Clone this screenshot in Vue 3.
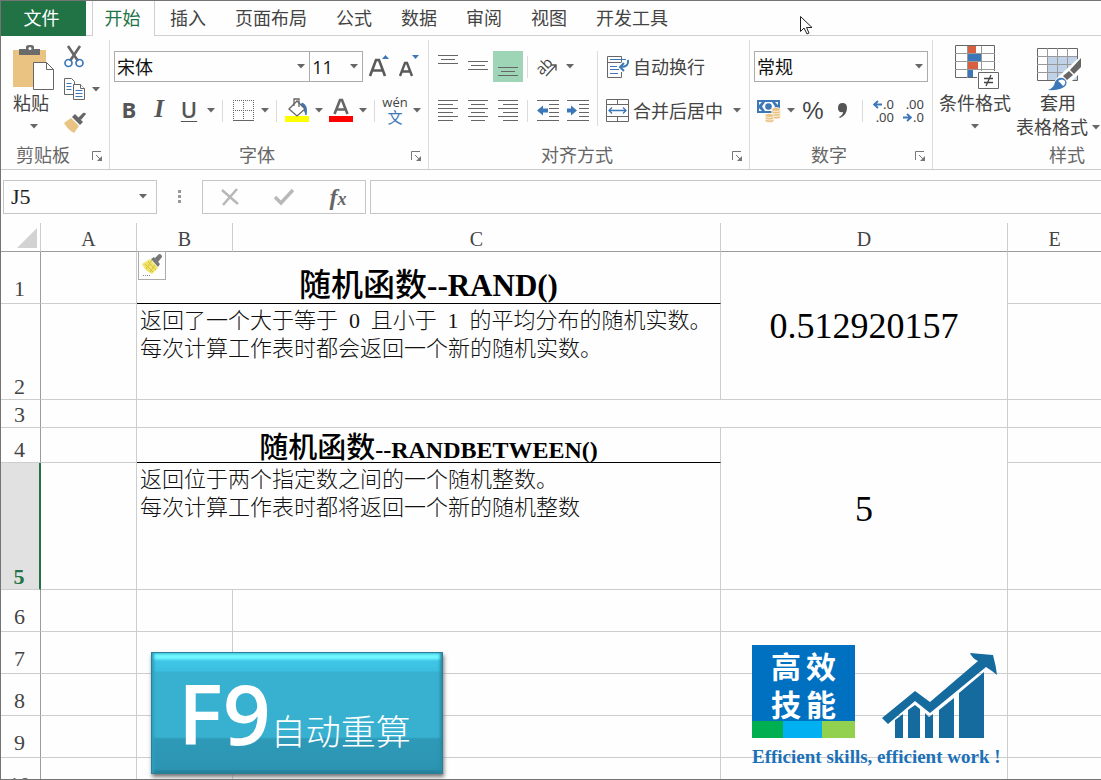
<script setup>
import { h, ref } from 'vue'

const Caret = () =>
  h('svg', { width: 8, height: 5, viewBox: '0 0 8 5', 'aria-hidden': 'true' }, [
    h('path', { d: 'M0 0h8L4 4.5z', fill: '#666' })
  ])

const Launcher = () =>
  h('svg', { width: 11, height: 11, viewBox: '0 0 11 11', fill: 'none', stroke: '#777', 'aria-hidden': 'true' }, [
    h('path', { d: 'M.5 9V.5H9M4 4l4 4' }),
    h('path', { d: 'M10 5v5H5z', fill: '#777', stroke: 'none' })
  ])

const tabs = ['插入', '页面布局', '公式', '数据', '审阅', '视图', '开发工具']
const alignRows = [
  { label: '顶端对齐', d: 'M0 4.5h20M3 8.5h14M0 12.5h20' },
  { label: '垂直居中', d: 'M0 10.5h20M3 14.5h14M0 18.5h20' },
  { label: '底端对齐', d: 'M0 16.5h20M3 20.5h14M0 24.5h20', on: true }
]
const alignCols = [
  { label: '左对齐', d: 'M0 5.5h20M0 9.5h15M0 13.5h20M0 17.5h15M0 21.5h20M0 25.5h15' },
  { label: '居中', d: 'M0 5.5h20M3 9.5h14M0 13.5h20M3 17.5h14M0 21.5h20M3 25.5h14' },
  { label: '右对齐', d: 'M0 5.5h20M5 9.5h15M0 13.5h20M5 17.5h15M0 21.5h20M5 25.5h15' }
]
const cellName = ref('J5')
const formula = ref('')
</script>

<template>
  <div class="window">
    <nav class="tabs" aria-label="功能区">
      <button class="tab file">文件</button>
      <button class="tab active">开始</button>
      <button v-for="t in tabs" :key="t" class="tab">{{ t }}</button>
    </nav>

    <div class="ribbon">
      <section class="group clipboard">
        <div class="body">
          <button class="big paste">
            <svg width="42" height="46" viewBox="0 0 42 46">
              <path d="M0 5h33v37H0z" fill="#eac282" />
              <path d="M6 4h7V2q0-2 3-2h2q3 0 3 2v2h6v6H6z" fill="#6b6b6b" />
              <circle cx="17" cy="3.500" r="1.500" fill="#fff" />
              <path d="M20.500 17.500h13l7 7v20h-20z" fill="#fff" stroke="#666" />
              <path d="M33.500 17.500v7h7" fill="none" stroke="#666" />
            </svg>
            <span>粘贴</span>
            <Caret />
          </button>
          <div class="stack">
            <button class="tool" aria-label="剪切">
              <svg width="20" height="23" viewBox="0 0 20 23" fill="none">
                <path d="M4 1l10 15M16 1L6 16" stroke="#666" stroke-width="2.600" />
                <circle cx="4.500" cy="18" r="3.500" stroke="#3c77b8" stroke-width="1.700" />
                <circle cx="15.500" cy="18" r="3.500" stroke="#3c77b8" stroke-width="1.700" />
              </svg>
            </button>
            <button class="tool copy" aria-label="复制">
              <svg width="21" height="22" viewBox="0 0 21 22" fill="#fff" stroke="#666">
                <path d="M.5.500h7l3 3v13h-10z" />
                <path d="M2.500 5.500h5M2.500 8.500h5M2.500 11.500h5" stroke="#3c77b8" />
                <path d="M9.500 6.500h7l4 4v11h-11z" />
                <path d="M16.500 6.500v4h4" />
                <path d="M11.500 12.500h7M11.500 15.500h7M11.500 18.500h7" stroke="#3c77b8" />
              </svg>
              <Caret />
            </button>
            <button class="tool" aria-label="格式刷">
              <svg width="22" height="21" viewBox="0 0 22 21">
                <path d="M0 11l7-5 8 8-5 7q-6-3-10-10z" fill="#eac282" />
                <path d="M8 5l3-3 8 8-3 3z" fill="#666" />
                <path d="M14 6l5-5q2-1 3 1l-5 6z" fill="#666" />
              </svg>
            </button>
          </div>
        </div>
        <footer><span>剪贴板</span><button class="launch" aria-label="剪贴板选项"><Launcher /></button></footer>
      </section>

      <section class="group font">
        <div class="body column">
          <div class="line">
            <label class="combo family">
              <select aria-label="字体"><option>宋体</option></select><Caret />
            </label>
            <label class="combo size">
              <select aria-label="字号"><option>11</option></select><Caret />
            </label>
            <button class="cell" aria-label="增大字号">
              <svg width="22" height="26" viewBox="0 0 22 26">
                <path d="M2 22L8 6h3l6 16M4.500 16.500h10" fill="none" stroke="#5a5a5a" stroke-width="2.600" />
                <path d="M14 5l3.500-4L21 5z" fill="#3c77b8" />
              </svg>
            </button>
            <button class="cell" aria-label="减小字号">
              <svg width="22" height="26" viewBox="0 0 22 26">
                <path d="M2 22L7 9h2l5 13M4 17.500h8" fill="none" stroke="#5a5a5a" stroke-width="2.400" />
                <path d="M14 1h7l-3.500 4z" fill="#3c77b8" />
              </svg>
            </button>
          </div>
          <div class="line">
            <button class="cell glyph bold">B</button>
            <button class="cell glyph italic">I</button>
            <button class="cell glyph under">U</button>
            <button class="drop" aria-label="下划线类型"><Caret /></button>
            <i class="rule"></i>
            <button class="cell" aria-label="边框">
              <svg width="21" height="22" viewBox="0 0 21 22" fill="none" stroke="#666">
                <path d="M0 .5h21M.5 0v21M20.500 0v21M0 10.500h21M10.500 0v21" stroke-dasharray="1 1" />
                <path d="M0 20.500h21" />
              </svg>
            </button>
            <button class="drop" aria-label="边框类型"><Caret /></button>
            <i class="rule"></i>
            <button class="cell" aria-label="填充颜色">
              <svg width="24" height="25" viewBox="0 0 24 25">
                <path d="M0 18h24v6H0z" fill="#ff0" />
                <path d="M17 5q6 2 4 12-1-6-5-8z" fill="#3c77b8" stroke="#3c77b8" />
                <path d="M4 11l8-8 8 8-8 7z" fill="#fff" stroke="#666" stroke-width="1.300" />
                <path d="M9 8V1h5v8" fill="none" stroke="#666" stroke-width="1.300" />
              </svg>
            </button>
            <button class="drop" aria-label="更多填充颜色"><Caret /></button>
            <button class="cell" aria-label="字体颜色">
              <svg width="24" height="25" viewBox="0 0 24 25">
                <path d="M0 18h24v6H0z" fill="#f00" />
                <path d="M5.500 16l5.500-14h2l5.500 14M8 11.500h8" fill="none" stroke="#666" stroke-width="2.600" />
              </svg>
            </button>
            <button class="drop" aria-label="更多字体颜色"><Caret /></button>
            <i class="rule"></i>
            <button class="cell pinyin"><span>wén</span><b>文</b></button>
            <button class="drop" aria-label="拼音选项"><Caret /></button>
          </div>
        </div>
        <footer><span>字体</span><button class="launch" aria-label="字体选项"><Launcher /></button></footer>
      </section>

      <section class="group align">
        <div class="body">
          <div class="column">
            <div class="line">
              <button v-for="a in alignRows" :key="a.label" class="cell" :class="{ on: a.on }" :aria-label="a.label">
                <svg width="20" height="31" viewBox="0 0 20 31" stroke="#666"><path :d="a.d" /></svg>
              </button>
              <i class="rule"></i>
              <button class="cell" aria-label="方向">
                <svg class="turn" width="22" height="22" viewBox="0 0 22 22">
                  <text x="0" y="15" transform="rotate(-45 8 12)" font-size="15" fill="#444">ab</text>
                  <path d="M9 20L19 9M13.500 9H19v5.500" fill="none" stroke="#555" stroke-width="1.400" />
                </svg>
              </button>
              <button class="drop" aria-label="方向选项"><Caret /></button>
            </div>
            <div class="line">
              <button v-for="a in alignCols" :key="a.label" class="cell" :aria-label="a.label">
                <svg width="20" height="31" viewBox="0 0 20 31" stroke="#666"><path :d="a.d" /></svg>
              </button>
              <i class="rule"></i>
              <button class="cell" aria-label="减少缩进量">
                <svg width="22" height="31" viewBox="0 0 22 31">
                  <path d="M0 5.500h22M12 9.500h10M12 13.500h10M12 17.500h10M12 21.500h10M0 25.500h22" stroke="#666" />
                  <path d="M0 15.500l6-5v3h5v4H6v3z" fill="#3c77b8" />
                </svg>
              </button>
              <button class="cell" aria-label="增加缩进量">
                <svg width="22" height="31" viewBox="0 0 22 31">
                  <path d="M0 5.500h22M12 9.500h10M12 13.500h10M12 17.500h10M12 21.500h10M0 25.500h22" stroke="#666" />
                  <path d="M10 15.500l-6-5v3H0v4h4v3z" fill="#3c77b8" />
                </svg>
              </button>
            </div>
          </div>
          <div class="column wraps">
            <button class="wide">
              <svg width="24" height="24" viewBox="0 0 24 24" fill="none" stroke="#666">
                <path d="M15.500 7V1.500H1.500v21h14V17M1.500 7.500h14" />
                <path d="M4 4.500h16M4 11.500h7M4 14.500h9M4 18.500h8" stroke="#3c77b8" />
                <path d="M22 5q1 7-7 7M18 8l-4 4 4 4" stroke="#3c77b8" stroke-width="2" />
              </svg>
              <span>自动换行</span>
            </button>
            <button class="wide">
              <svg width="24" height="24" viewBox="0 0 24 24" fill="none" stroke="#666">
                <path d="M.5.500h22v22H.5zM.5 5.500h22M.5 17.500h22M11.500.500v5M11.500 17.500v5" />
                <path d="M3 11.500h17M6 8.500l-3 3 3 3M17 8.500l3 3-3 3" stroke="#3c77b8" stroke-width="1.300" />
              </svg>
              <span>合并后居中</span>
              <Caret />
            </button>
          </div>
        </div>
        <footer><span>对齐方式</span><button class="launch" aria-label="对齐选项"><Launcher /></button></footer>
      </section>

      <section class="group number">
        <div class="body column">
          <label class="combo format">
            <select aria-label="数字格式"><option>常规</option></select><Caret />
          </label>
          <div class="line">
            <button class="cell" aria-label="会计数字格式">
              <svg width="24" height="24" viewBox="0 0 24 24">
                <path d="M0 1h23v13H0z" fill="#3c77b8" />
                <path d="M2 3h3L2 6zM21 3h-3l3 3zM2 12h3L2 9z" fill="#fff" />
                <path d="M5 7.500L8 3h7l3 4.500-3 4.500H8z" fill="#fff" />
                <circle cx="11.500" cy="7.500" r="3.300" fill="#3c77b8" />
                <g fill="#eac282" stroke="#fff" stroke-width=".700">
                  <ellipse cx="19" cy="18" rx="4.500" ry="2" /><ellipse cx="19" cy="15.500" rx="4.500" ry="2" />
                  <ellipse cx="19" cy="13" rx="4.500" ry="2" /><ellipse cx="19" cy="10.500" rx="4.500" ry="2" />
                  <ellipse cx="12.500" cy="21.500" rx="4.500" ry="2" /><ellipse cx="12.500" cy="19" rx="4.500" ry="2" />
                  <ellipse cx="12.500" cy="16.500" rx="4.500" ry="2" />
                </g>
              </svg>
            </button>
            <button class="drop" aria-label="货币"><Caret /></button>
            <button class="cell percent">%</button>
            <button class="cell" aria-label="千位分隔样式">
              <svg width="10" height="16" viewBox="0 0 10 16"><path d="M4.500 0Q9 0 9 5q0 7-7 10l-1-1q4-2 4-5-5 1-5-4Q0 0 4.500 0z" fill="#555" /></svg>
            </button>
            <i class="rule"></i>
            <button class="cell decimals">
              <span><svg width="9" height="9" viewBox="0 0 9 9"><path d="M9 4.500H1M5 1L1 4.500 5 8" fill="none" stroke="#3c77b8" stroke-width="1.800" /></svg>.0</span>
              <span>.00</span>
            </button>
            <button class="cell decimals">
              <span>.00</span>
              <span><svg width="9" height="9" viewBox="0 0 9 9"><path d="M0 4.500h8M4 1l4 3.500L4 8" fill="none" stroke="#3c77b8" stroke-width="1.800" /></svg>.0</span>
            </button>
          </div>
        </div>
        <footer><span>数字</span><button class="launch" aria-label="数字选项"><Launcher /></button></footer>
      </section>

      <section class="group styles">
        <div class="body">
          <button class="big">
            <svg width="44" height="46" viewBox="0 0 44 46" fill="none">
              <path d="M.5.500h39v32H.5z" fill="#fff" stroke="#666" />
              <path d="M12.500 1v32M26.500 1v32M0 8.500h40M0 16.500h40M0 24.500h40" stroke="#999" />
              <path d="M13 1h8v7h-8zM13 17h10v7H13z" fill="#d6603f" />
              <path d="M13 9h13v7H13zM13 25h5v7h-5z" fill="#3c77b8" />
              <path d="M22 26h22v19H22z" fill="#fff" />
              <path d="M23.500 27.500h20v16h-20z" fill="#fff" stroke="#666" />
              <path d="M29 33.500h9M29 37.500h9M36 30l-5 11" stroke="#444" stroke-width="1.300" />
            </svg>
            <span>条件格式</span>
            <Caret />
          </button>
          <button class="big tablefmt">
            <svg width="46" height="46" viewBox="0 0 46 46" fill="none">
              <path d="M.5 3.500h40v32H.5z" fill="#fff" stroke="#666" />
              <path d="M11 12h29v23H11z" fill="#bfd2e8" />
              <path d="M10.500 3v32M20.500 3v32M30.500 3v32M0 11.500h40M0 19.500h40M0 27.500h40" stroke="#999" />
              <path d="M46 9L22 31 9 46h16l21-21z" fill="#fff" />
              <path d="M44 13v9l-7 7-4-4z" fill="#666" />
              <path d="M32 26l4 4-6 5-4-4z" fill="#666" />
              <path d="M11 45q6-2 7-8 3-5 8-4 5 3 3 7-4 6-18 5z" fill="#3c77b8" />
              <path d="M21 36q4-3 7 0 1 3-2 5-3-4-5-5z" fill="#fff" />
            </svg>
            <span>套用</span>
            <span class="second">表格格式<Caret /></span>
          </button>
        </div>
        <footer><span>样式</span></footer>
      </section>
    </div>

    <div class="formulabar">
      <div class="namebox">
        <input v-model="cellName" aria-label="名称框" /><button aria-label="名称列表"><Caret /></button>
      </div>
      <svg class="grip" width="3" height="14" viewBox="0 0 3 14" fill="#999"><path d="M0 0h3v3H0zM0 5h3v3H0zM0 10h3v3H0z" /></svg>
      <div class="actions">
        <button aria-label="取消"><svg width="18" height="18" viewBox="0 0 18 18"><path d="M1 2l16 14M16 1L2 17" stroke="#b8b8b8" stroke-width="2.500" /></svg></button>
        <button aria-label="输入"><svg width="20" height="18" viewBox="0 0 20 18"><path d="M1 9l6 6L19 2" fill="none" stroke="#b8b8b8" stroke-width="3.500" /></svg></button>
        <button class="fx" aria-label="插入函数">f<small>x</small></button>
      </div>
      <input v-model="formula" class="formula" aria-label="编辑栏" />
    </div>

    <main class="sheet">
      <table>
        <colgroup><col class="c0" /><col class="c1" /><col class="c1" /><col class="c3" /><col class="c4" /><col /></colgroup>
        <thead>
          <tr>
            <th class="corner"><svg width="20" height="20" viewBox="0 0 20 20"><path d="M20 0v20H0z" fill="#d2d2d2" /></svg></th>
            <th>A</th><th>B</th><th>C</th><th>D</th><th>E</th>
          </tr>
        </thead>
        <tbody>
          <tr class="r1"><th>1</th><td></td><td colspan="2" class="title">随机函数<span>--RAND()</span></td><td rowspan="2" class="value">0.512920157</td><td></td></tr>
          <tr class="r2"><th>2</th><td></td><td colspan="2" class="note">返回了一个大于等于 <span>0</span> 且小于 <span>1</span> 的平均分布的随机实数。<br />每次计算工作表时都会返回一个新的随机实数。</td><td></td></tr>
          <tr class="r3"><th>3</th><td></td><td colspan="3"></td><td></td></tr>
          <tr class="r4"><th>4</th><td></td><td colspan="2" class="title small">随机函数<span>--RANDBETWEEN()</span></td><td rowspan="2" class="value">5</td><td></td></tr>
          <tr class="r5"><th class="current">5</th><td></td><td colspan="2" class="note">返回位于两个指定数之间的一个随机整数。<br />每次计算工作表时都将返回一个新的随机整数</td><td></td></tr>
          <tr v-for="n in [6, 7, 8, 9, 10]" :key="n" class="rn"><th>{{ n }}</th><td></td><td></td><td></td><td></td><td></td></tr>
        </tbody>
      </table>

      <button class="brush" aria-label="粘贴选项">
        <svg width="24" height="24" viewBox="0 0 24 24">
          <path d="M2 10l8-5 8 9-6 6Q5 17 2 10z" fill="#f0e36a" />
          <path d="M5 10l8 8M8 8l8 8M6 15l6-9M10 18l5-7" stroke="#d6c23c" />
          <path d="M11 5l3-2 6 7-2 3zM15 4l4-4q3 0 3 3l-4 5z" fill="#777" />
          <path d="M3 21.500h8" stroke="#888" stroke-dasharray="1 1" />
        </svg>
      </button>

      <button class="recalc"><b>F9</b><span>自动重算</span></button>

      <div class="brand">
        <div class="marks">
          <div class="plate">
            <p><span>高</span><span>效</span></p>
            <p><span>技</span><span>能</span></p>
            <div class="stripes"><i></i><i></i><i></i></div>
          </div>
          <svg width="117" height="87" viewBox="0 0 117 87" fill="#156a9e">
            <path d="M1 67L34 40l15 11 48-41q-6-3-8-8 11 1 23 2 3 11 4 20-6-5-11-8L49 62 34 50 7 73z" />
            <path d="M14 69l8-6v24h-8zM27 59l7-5 5 4v29H27zM44 62l4 4 4-3v24h-8zM58 59l15-12v40H58zM78 42l25-21v66H78z" />
          </svg>
        </div>
        <strong>Efficient skills, efficient work !</strong>
      </div>
    </main>

    <svg class="pointer" width="13" height="19" viewBox="0 0 13 19" aria-hidden="true">
      <path d="M.5.500v15l3.500-3.500 3 6 2-1-2.500-5.500H12z" fill="#fff" stroke="#222" />
    </svg>
  </div>
</template>

<style>
body { margin: 0; background: #fefefe; }
</style>

<style scoped>
* { box-sizing: border-box; }
.window {
  display: flex; flex-direction: column; height: 100vh; overflow: hidden; position: relative;
  border: 1px solid #747474; border-right: 0; background: #fefefe; color: #444;
  font: 18px/24px "Open Sans", "Noto Sans CJK SC", sans-serif;
}
button, select, input { font: inherit; color: inherit; background: none; border: 0; padding: 0; margin: 0; outline: 0; border-radius: 0; }
button { display: flex; align-items: center; justify-content: center; }
svg { display: block; flex: none; }

.tabs { display: flex; gap: 1px; height: 35px; flex: none; border-bottom: 1px solid #cfcfcf; }
.tab { padding: 0 14px 1px; height: 34px; white-space: nowrap; }
.file { width: 85px; height: 35px; background: #217346; color: #fff; margin-right: 5px; padding: 0 4px 2px 0; }
.active { width: 63px; height: 35px; padding: 0 2px 2px 0; background: #fefefe; color: #217346; border: solid #cfcfcf; border-width: 0 1px; }

.ribbon { display: flex; height: 134px; flex: none; overflow: hidden; border-bottom: 1px solid #cbcbcb; }
.group { display: flex; flex-direction: column; flex: none; margin-top: 4px; padding-top: 2px; border-right: 1px solid #dcdcdc; }
.body { display: flex; flex: 1; padding: 9px 4px 0; }
.column { display: flex; flex-direction: column; gap: 13px; }
.line { display: flex; align-items: center; height: 31px; }
footer { display: flex; height: 26px; color: #666; }
footer span { flex: 1; text-align: center; }
.launch { width: 24px; }
.clipboard { width: 109px; }
.clipboard .body, .styles .body { padding-top: 3px; }
.clipboard .body { padding-left: 3px; }
.big { flex-direction: column; justify-content: flex-start; }
.big > span + svg { margin-top: 9px; }
.paste { width: 54px; }
.paste > svg { margin-left: 6px; }
.stack { display: flex; flex-direction: column; gap: 11px; padding-left: 6px; }
.tool { height: 22px; gap: 7px; justify-content: flex-start; }
.font { width: 319px; }
.cell { width: 30px; height: 31px; flex: none; }
.cell.on { background: #9fd5b7; }
.drop { width: 14px; height: 31px; flex: none; }
.rule { width: 1px; height: 22px; margin: 0 5px 0 4px; background: #dcdcdc; }
.combo { display: flex; align-items: center; height: 31px; border: 1px solid #ababab; padding-right: 4px; color: #111; }
.combo select { flex: 1; min-width: 0; height: 29px; padding-left: 2px; appearance: none; }
.family { width: 197px; }
.size { width: 54px; margin: 0 1px 0 -1px; }
.format { width: 174px; }
.glyph { font-weight: 700; font-size: 22px; color: #555; padding-bottom: 3px; }
.italic { font-family: "Liberation Serif", serif; font-style: italic; font-size: 25px; }
.under { text-decoration: underline; font-weight: 600; text-decoration-thickness: 1px; text-underline-offset: 3px; }
.turn { overflow: visible; }
.pinyin { flex-direction: column; font-size: 13px; line-height: 13px; }
.pinyin b { color: #3c77b8; font-weight: 400; font-size: 15px; line-height: 16px; }
.align { width: 321px; }
.wraps { margin-left: 4px; padding-left: 8px; border-left: 1px solid #dcdcdc; height: 75px; }
.wide { height: 31px; gap: 3px; justify-content: flex-start; white-space: nowrap; }
.wide span + svg { margin-left: 7px; }
.number { width: 183px; }
.percent { font-family: "Liberation Sans", sans-serif; font-size: 24px; }
.decimals { flex-direction: column; font: 13px/13px "Noto Sans", sans-serif; align-items: flex-end; padding-right: 4px; }
.decimals span { display: flex; align-items: center; gap: 1px; }
.styles { width: 268px; border-right: 0; }
.styles .big { width: 78px; padding-right: 2px; white-space: nowrap; }
.styles .big > svg:first-child { margin-left: 3px; }
.styles .tablefmt { width: 86px; padding-right: 0; }
.second { display: flex; align-items: center; gap: 4px; }

.formulabar { display: flex; align-items: center; height: 53px; flex: none; padding: 0 0 0 2px; }
.namebox { display: flex; width: 154px; height: 34px; border: 1px solid #c6c6c6; }
.namebox input { flex: 1; min-width: 0; padding-left: 7px; font: 22px "Liberation Serif", serif; color: #222; }
.namebox button { width: 26px; }
.grip { margin: 0 21px; }
.actions { display: flex; width: 164px; height: 34px; border: 1px solid #c6c6c6; }
.actions button { flex: 1; }
.fx { font: italic 700 24px/30px "Liberation Serif", serif; color: #666; }
.fx small { font-size: 18px; padding-top: 4px; }
.formula { flex: 1; min-width: 0; height: 34px; margin-left: 4px; border: 1px solid #c6c6c6; border-right: 0; }

.sheet { position: relative; flex: 1; min-height: 0; overflow: hidden; }
table { width: 100%; table-layout: fixed; border-collapse: separate; border-spacing: 0; }
.c0 { width: 40px; } .c1 { width: 96px; } .c3 { width: 488px; } .c4 { width: 287px; }
th, td { padding: 0; border: solid #cdcdcd; border-width: 0 1px 1px 0; }
tr > :last-child { border-right: 0; }
th { font: 22px/24px "Liberation Serif", serif; vertical-align: bottom; }
thead th { height: 29px; font-size: 20px; line-height: 24px; border-bottom-color: #9c9c9c; }
.corner svg { margin: 0 3px 3px auto; }
tbody th { border-right-color: #9c9c9c; padding-right: 2px; }
.r1 th, .rn th { padding-bottom: 2px; }
tbody .current { background: #e1e1e1; color: #217346; font-weight: 700; border-right: 2px solid #217346; }
.r1 { height: 52px; } .r2 { height: 96px; } .r3 { height: 28px; } .r4 { height: 35px; } .r5 { height: 127px; } .rn { height: 42px; }
.title { color: #000; text-align: center; vertical-align: bottom; padding-bottom: 2px; font: 500 32px/36px "Noto Sans CJK SC", sans-serif; border-bottom-color: #000; white-space: nowrap; }
.title span { font: 700 31px/30px "Liberation Serif", serif; }
.title.small { font-size: 29px; line-height: 32px; padding: 0; }
.title.small span { font-size: 24px; line-height: 24px; }
.note { color: #111; vertical-align: top; padding: 0 0 0 3px; font: 300 22px/28px "Noto Sans CJK SC", sans-serif; white-space: nowrap; }
.note span { font: 400 22px/20px "Liberation Serif", serif; margin: 0 6px; }
.value { color: #000; text-align: center; font: 36px/40px "Liberation Serif", serif; }

.brush { position: absolute; left: 137px; top: 28px; width: 28px; height: 29px; background: #fefefe; border: 1px solid #ababab; }
.recalc {
  position: absolute; left: 150px; top: 429px; width: 292px; height: 122px; padding: 0 0 4px 26px; color: #fff;
  justify-content: flex-start; align-items: baseline; border: solid 1px #2b7f98;
  background: linear-gradient(#55dcf0 0, #6ff6ff 3px, #6ff6ff 5px, #3fc6e6 8px, #3bbfe0 18px, #38b1d1 19px, #38b1d1 84px, #2e9ab8 86px, #2c94b2 100%);
  box-shadow: 1px 3px 4px #777, inset 3px 0 3px -1px #2f9fbe, inset -3px 0 3px -1px #2b8ca8, inset 0 -3px 3px -1px #24788f;
}
.recalc b { font: 600 84px/120px "Open Sans", sans-serif; }
.recalc span { font: 300 35px/40px "Noto Sans CJK SC", sans-serif; white-space: nowrap; }
.brand { position: absolute; left: 751px; top: 422px; width: 252px; color: #1b70b8; }
.marks { display: flex; gap: 26px; align-items: flex-end; }
.plate { width: 103px; background: #0070c0; color: #fff; }
.plate p { display: flex; gap: 5px; justify-content: center; margin: 0; padding-top: 2px; font: 700 30px/36px "Noto Sans CJK SC", sans-serif; }
.stripes { display: grid; grid-template-columns: 31px 39px 33px; height: 17px; }
.stripes i { background: #00b050; }
.stripes i:nth-child(2) { background: #00b0f0; }
.stripes i:nth-child(3) { background: #92d050; }
.brand strong { display: block; margin-top: 7px; font: 700 19px/24px "Liberation Serif", serif; white-space: nowrap; }
.pointer { position: absolute; left: 799px; top: 15px; }
</style>
